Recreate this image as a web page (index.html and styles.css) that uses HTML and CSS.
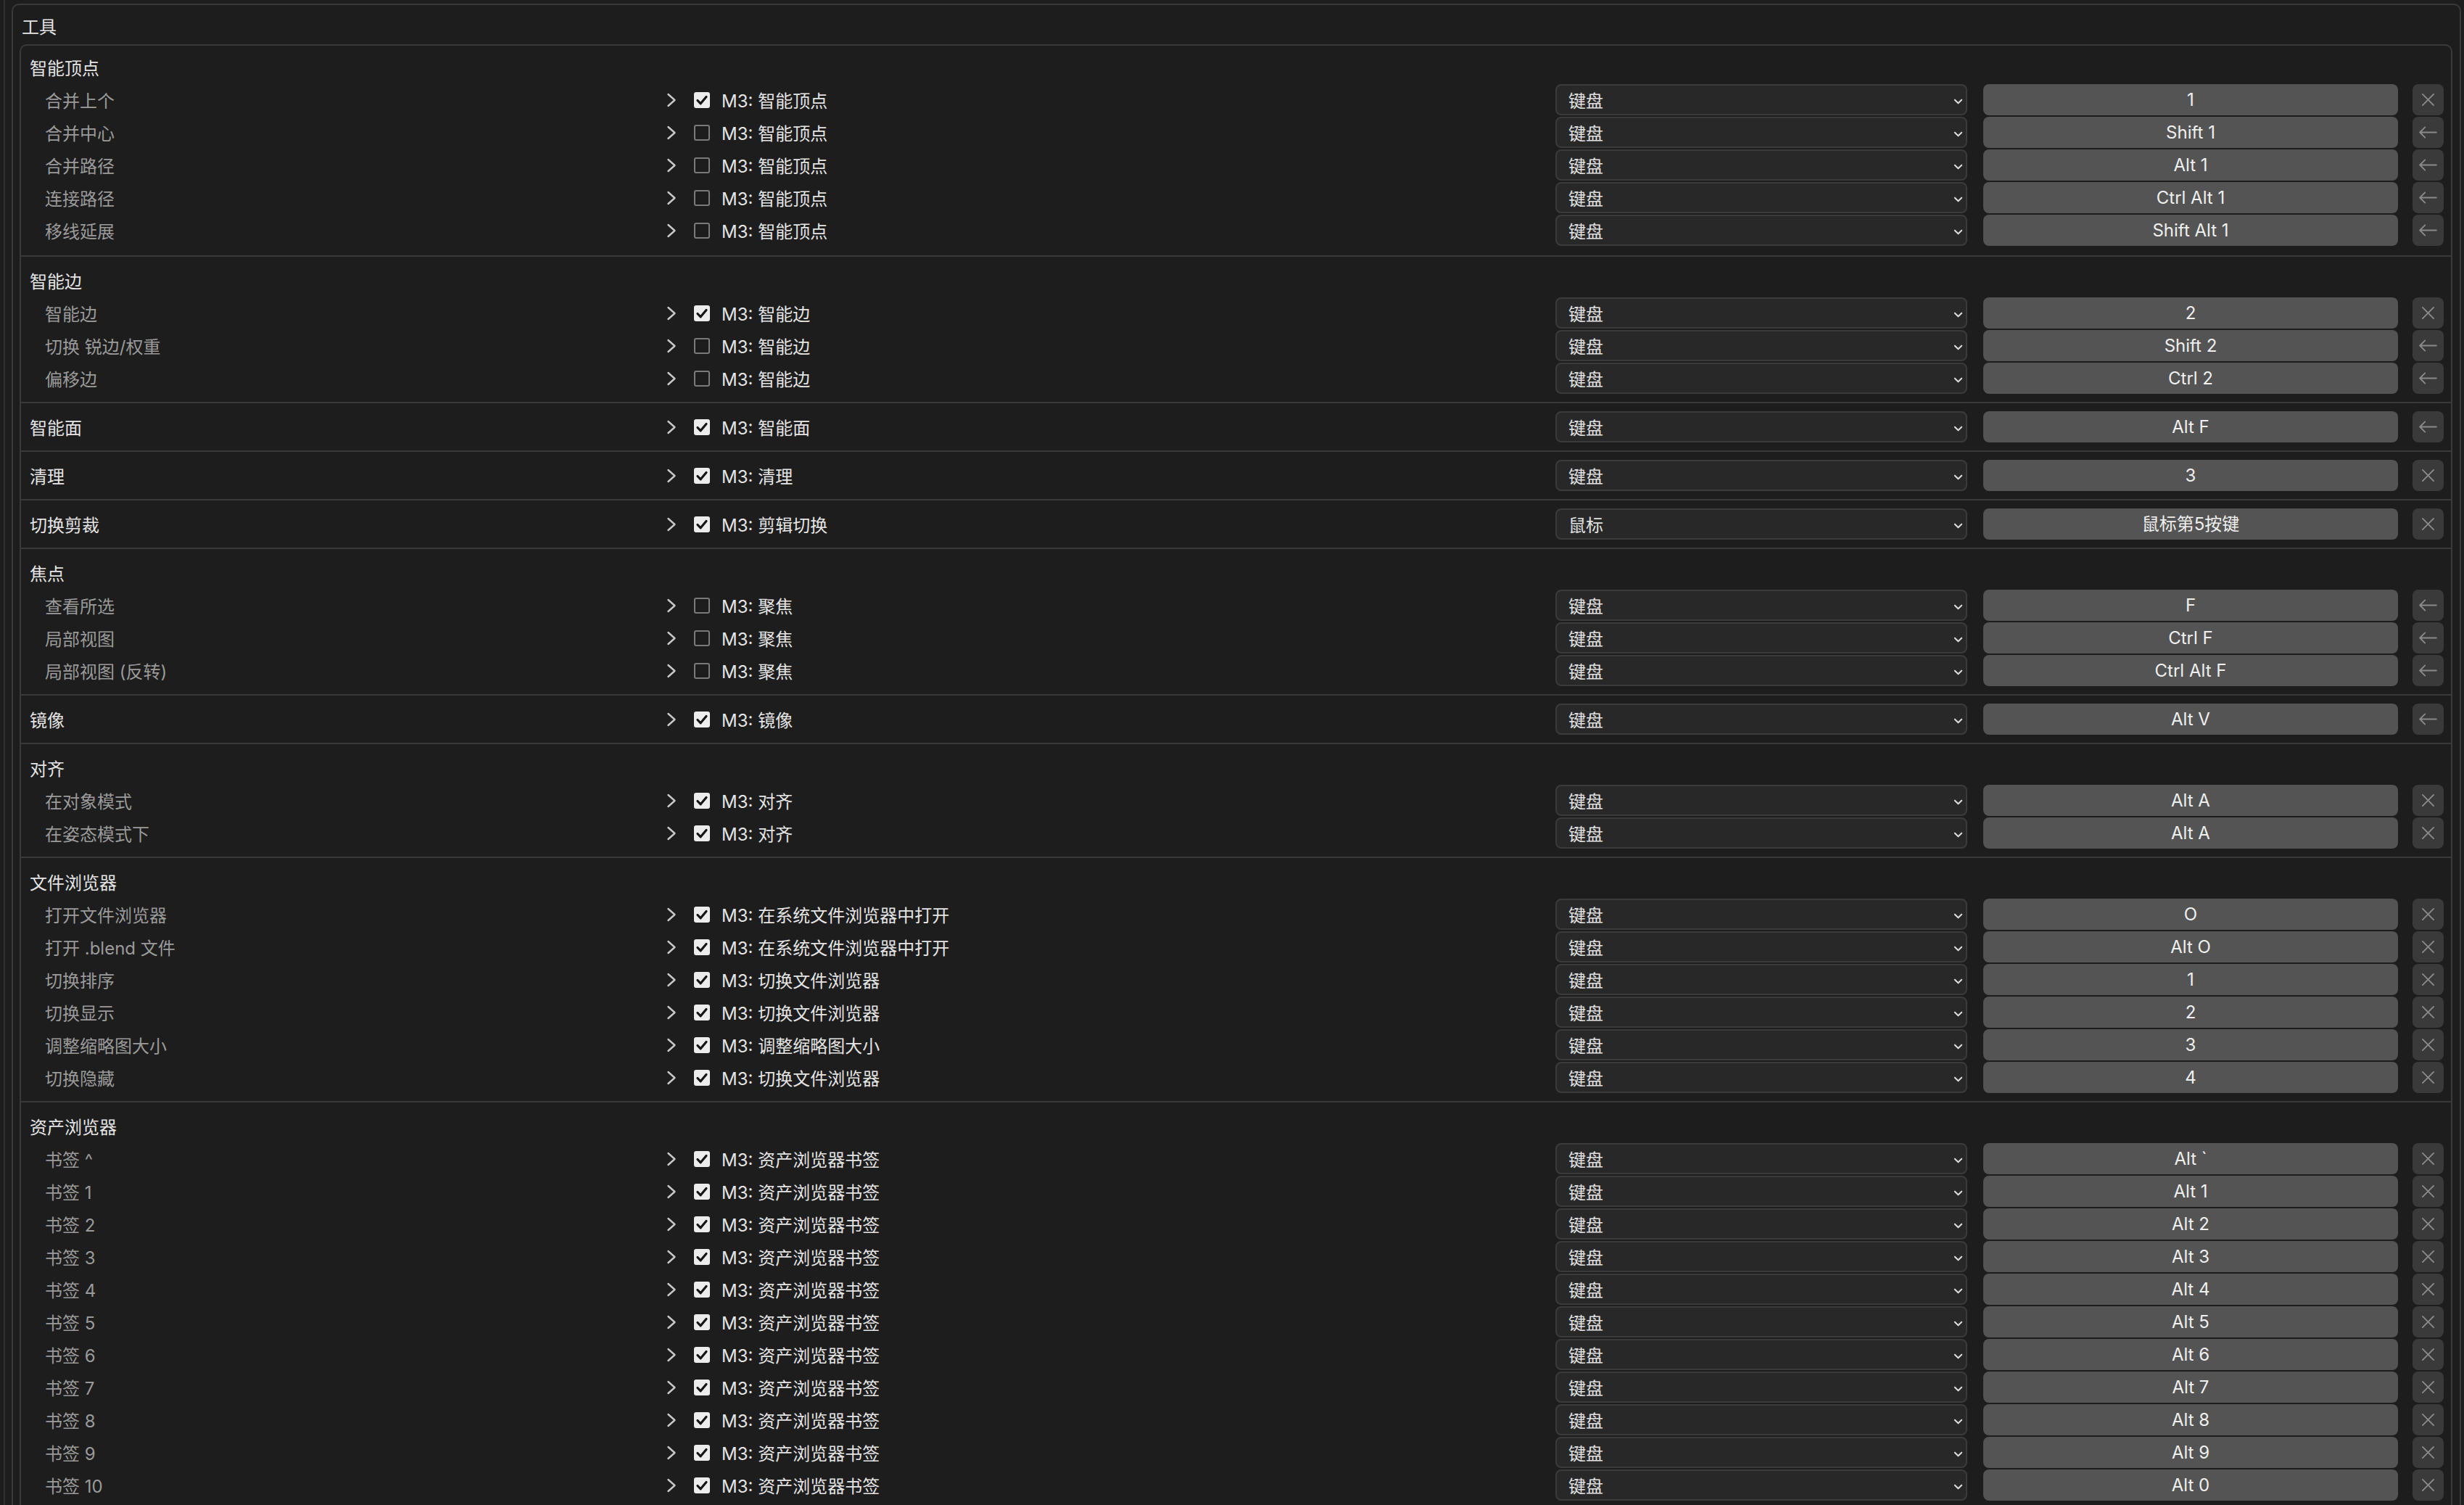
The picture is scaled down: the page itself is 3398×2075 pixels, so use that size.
FILE: index.html
```html
<!DOCTYPE html>
<html lang="zh">
	<head>
		<meta charset="UTF-8" />
		<meta name="viewport" content="width=device-width, initial-scale=1.0" />
		<title>工具 - 快捷键</title>
		<link rel="stylesheet" href="styles.css">
	</head>
	<body>
		<!-- shared icons -->
		<svg class="defs" width="0" height="0">
			<symbol id="i-chev" viewBox="0 0 14 20"><polyline points="2.5,2 11.5,10 2.5,18" fill="none" stroke="currentColor" stroke-width="2.4" stroke-linecap="round" stroke-linejoin="round"/></symbol>
			<symbol id="i-tick" viewBox="0 0 22 22"><polyline points="5,11.5 9.2,15.8 17,6.5" fill="none" stroke="currentColor" stroke-width="3.2" stroke-linecap="round" stroke-linejoin="round"/></symbol>
			<symbol id="i-down" viewBox="0 0 14 10"><polyline points="2,2.5 7,7.5 12,2.5" fill="none" stroke="currentColor" stroke-width="2.2" stroke-linecap="round" stroke-linejoin="round"/></symbol>
			<symbol id="i-x" viewBox="0 0 20 20"><path d="M2 2 L18 18 M18 2 L2 18" fill="none" stroke="currentColor" stroke-width="2" stroke-linecap="round"/></symbol>
			<symbol id="i-back" viewBox="0 0 28 18"><path d="M2 9 H26 M9.5 1.5 L2 9 L9.5 16.5" fill="none" stroke="currentColor" stroke-width="2" stroke-linecap="round" stroke-linejoin="round"/></symbol>
		</svg>

		<div class="region">
			<div class="panel">
				<div class="panel-title">工具</div>
				<div class="box">

					<div class="section">
						<div class="row"><span class="label head">智能顶点</span></div>
						<div class="row">
							<span class="label">合并上个</span>
							<span class="expand"><svg><use href="#i-chev"/></svg></span>
							<span class="check on"><svg><use href="#i-tick"/></svg></span>
							<span class="op">M3: 智能顶点</span>
							<span class="select">键盘<svg><use href="#i-down"/></svg></span>
							<span class="key">1</span>
							<span class="btn"><svg class="x"><use href="#i-x"/></svg></span>
						</div>
						<div class="row">
							<span class="label">合并中心</span>
							<span class="expand"><svg><use href="#i-chev"/></svg></span>
							<span class="check"></span>
							<span class="op">M3: 智能顶点</span>
							<span class="select">键盘<svg><use href="#i-down"/></svg></span>
							<span class="key">Shift 1</span>
							<span class="btn"><svg class="back"><use href="#i-back"/></svg></span>
						</div>
						<div class="row">
							<span class="label">合并路径</span>
							<span class="expand"><svg><use href="#i-chev"/></svg></span>
							<span class="check"></span>
							<span class="op">M3: 智能顶点</span>
							<span class="select">键盘<svg><use href="#i-down"/></svg></span>
							<span class="key">Alt 1</span>
							<span class="btn"><svg class="back"><use href="#i-back"/></svg></span>
						</div>
						<div class="row">
							<span class="label">连接路径</span>
							<span class="expand"><svg><use href="#i-chev"/></svg></span>
							<span class="check"></span>
							<span class="op">M3: 智能顶点</span>
							<span class="select">键盘<svg><use href="#i-down"/></svg></span>
							<span class="key">Ctrl Alt 1</span>
							<span class="btn"><svg class="back"><use href="#i-back"/></svg></span>
						</div>
						<div class="row">
							<span class="label">移线延展</span>
							<span class="expand"><svg><use href="#i-chev"/></svg></span>
							<span class="check"></span>
							<span class="op">M3: 智能顶点</span>
							<span class="select">键盘<svg><use href="#i-down"/></svg></span>
							<span class="key">Shift Alt 1</span>
							<span class="btn"><svg class="back"><use href="#i-back"/></svg></span>
						</div>
					</div>

					<div class="section">
						<div class="row"><span class="label head">智能边</span></div>
						<div class="row">
							<span class="label">智能边</span>
							<span class="expand"><svg><use href="#i-chev"/></svg></span>
							<span class="check on"><svg><use href="#i-tick"/></svg></span>
							<span class="op">M3: 智能边</span>
							<span class="select">键盘<svg><use href="#i-down"/></svg></span>
							<span class="key">2</span>
							<span class="btn"><svg class="x"><use href="#i-x"/></svg></span>
						</div>
						<div class="row">
							<span class="label">切换 锐边/权重</span>
							<span class="expand"><svg><use href="#i-chev"/></svg></span>
							<span class="check"></span>
							<span class="op">M3: 智能边</span>
							<span class="select">键盘<svg><use href="#i-down"/></svg></span>
							<span class="key">Shift 2</span>
							<span class="btn"><svg class="back"><use href="#i-back"/></svg></span>
						</div>
						<div class="row">
							<span class="label">偏移边</span>
							<span class="expand"><svg><use href="#i-chev"/></svg></span>
							<span class="check"></span>
							<span class="op">M3: 智能边</span>
							<span class="select">键盘<svg><use href="#i-down"/></svg></span>
							<span class="key">Ctrl 2</span>
							<span class="btn"><svg class="back"><use href="#i-back"/></svg></span>
						</div>
					</div>

					<div class="section">
						<div class="row">
							<span class="label head">智能面</span>
							<span class="expand"><svg><use href="#i-chev"/></svg></span>
							<span class="check on"><svg><use href="#i-tick"/></svg></span>
							<span class="op">M3: 智能面</span>
							<span class="select">键盘<svg><use href="#i-down"/></svg></span>
							<span class="key">Alt F</span>
							<span class="btn"><svg class="back"><use href="#i-back"/></svg></span>
						</div>
					</div>

					<div class="section">
						<div class="row">
							<span class="label head">清理</span>
							<span class="expand"><svg><use href="#i-chev"/></svg></span>
							<span class="check on"><svg><use href="#i-tick"/></svg></span>
							<span class="op">M3: 清理</span>
							<span class="select">键盘<svg><use href="#i-down"/></svg></span>
							<span class="key">3</span>
							<span class="btn"><svg class="x"><use href="#i-x"/></svg></span>
						</div>
					</div>

					<div class="section">
						<div class="row">
							<span class="label head">切换剪裁</span>
							<span class="expand"><svg><use href="#i-chev"/></svg></span>
							<span class="check on"><svg><use href="#i-tick"/></svg></span>
							<span class="op">M3: 剪辑切换</span>
							<span class="select">鼠标<svg><use href="#i-down"/></svg></span>
							<span class="key">鼠标第5按键</span>
							<span class="btn"><svg class="x"><use href="#i-x"/></svg></span>
						</div>
					</div>

					<div class="section">
						<div class="row"><span class="label head">焦点</span></div>
						<div class="row">
							<span class="label">查看所选</span>
							<span class="expand"><svg><use href="#i-chev"/></svg></span>
							<span class="check"></span>
							<span class="op">M3: 聚焦</span>
							<span class="select">键盘<svg><use href="#i-down"/></svg></span>
							<span class="key">F</span>
							<span class="btn"><svg class="back"><use href="#i-back"/></svg></span>
						</div>
						<div class="row">
							<span class="label">局部视图</span>
							<span class="expand"><svg><use href="#i-chev"/></svg></span>
							<span class="check"></span>
							<span class="op">M3: 聚焦</span>
							<span class="select">键盘<svg><use href="#i-down"/></svg></span>
							<span class="key">Ctrl F</span>
							<span class="btn"><svg class="back"><use href="#i-back"/></svg></span>
						</div>
						<div class="row">
							<span class="label">局部视图 (反转)</span>
							<span class="expand"><svg><use href="#i-chev"/></svg></span>
							<span class="check"></span>
							<span class="op">M3: 聚焦</span>
							<span class="select">键盘<svg><use href="#i-down"/></svg></span>
							<span class="key">Ctrl Alt F</span>
							<span class="btn"><svg class="back"><use href="#i-back"/></svg></span>
						</div>
					</div>

					<div class="section">
						<div class="row">
							<span class="label head">镜像</span>
							<span class="expand"><svg><use href="#i-chev"/></svg></span>
							<span class="check on"><svg><use href="#i-tick"/></svg></span>
							<span class="op">M3: 镜像</span>
							<span class="select">键盘<svg><use href="#i-down"/></svg></span>
							<span class="key">Alt V</span>
							<span class="btn"><svg class="back"><use href="#i-back"/></svg></span>
						</div>
					</div>

					<div class="section">
						<div class="row"><span class="label head">对齐</span></div>
						<div class="row">
							<span class="label">在对象模式</span>
							<span class="expand"><svg><use href="#i-chev"/></svg></span>
							<span class="check on"><svg><use href="#i-tick"/></svg></span>
							<span class="op">M3: 对齐</span>
							<span class="select">键盘<svg><use href="#i-down"/></svg></span>
							<span class="key">Alt A</span>
							<span class="btn"><svg class="x"><use href="#i-x"/></svg></span>
						</div>
						<div class="row">
							<span class="label">在姿态模式下</span>
							<span class="expand"><svg><use href="#i-chev"/></svg></span>
							<span class="check on"><svg><use href="#i-tick"/></svg></span>
							<span class="op">M3: 对齐</span>
							<span class="select">键盘<svg><use href="#i-down"/></svg></span>
							<span class="key">Alt A</span>
							<span class="btn"><svg class="x"><use href="#i-x"/></svg></span>
						</div>
					</div>

					<div class="section">
						<div class="row"><span class="label head">文件浏览器</span></div>
						<div class="row">
							<span class="label">打开文件浏览器</span>
							<span class="expand"><svg><use href="#i-chev"/></svg></span>
							<span class="check on"><svg><use href="#i-tick"/></svg></span>
							<span class="op">M3: 在系统文件浏览器中打开</span>
							<span class="select">键盘<svg><use href="#i-down"/></svg></span>
							<span class="key">O</span>
							<span class="btn"><svg class="x"><use href="#i-x"/></svg></span>
						</div>
						<div class="row">
							<span class="label">打开 .blend 文件</span>
							<span class="expand"><svg><use href="#i-chev"/></svg></span>
							<span class="check on"><svg><use href="#i-tick"/></svg></span>
							<span class="op">M3: 在系统文件浏览器中打开</span>
							<span class="select">键盘<svg><use href="#i-down"/></svg></span>
							<span class="key">Alt O</span>
							<span class="btn"><svg class="x"><use href="#i-x"/></svg></span>
						</div>
						<div class="row">
							<span class="label">切换排序</span>
							<span class="expand"><svg><use href="#i-chev"/></svg></span>
							<span class="check on"><svg><use href="#i-tick"/></svg></span>
							<span class="op">M3: 切换文件浏览器</span>
							<span class="select">键盘<svg><use href="#i-down"/></svg></span>
							<span class="key">1</span>
							<span class="btn"><svg class="x"><use href="#i-x"/></svg></span>
						</div>
						<div class="row">
							<span class="label">切换显示</span>
							<span class="expand"><svg><use href="#i-chev"/></svg></span>
							<span class="check on"><svg><use href="#i-tick"/></svg></span>
							<span class="op">M3: 切换文件浏览器</span>
							<span class="select">键盘<svg><use href="#i-down"/></svg></span>
							<span class="key">2</span>
							<span class="btn"><svg class="x"><use href="#i-x"/></svg></span>
						</div>
						<div class="row">
							<span class="label">调整缩略图大小</span>
							<span class="expand"><svg><use href="#i-chev"/></svg></span>
							<span class="check on"><svg><use href="#i-tick"/></svg></span>
							<span class="op">M3: 调整缩略图大小</span>
							<span class="select">键盘<svg><use href="#i-down"/></svg></span>
							<span class="key">3</span>
							<span class="btn"><svg class="x"><use href="#i-x"/></svg></span>
						</div>
						<div class="row">
							<span class="label">切换隐藏</span>
							<span class="expand"><svg><use href="#i-chev"/></svg></span>
							<span class="check on"><svg><use href="#i-tick"/></svg></span>
							<span class="op">M3: 切换文件浏览器</span>
							<span class="select">键盘<svg><use href="#i-down"/></svg></span>
							<span class="key">4</span>
							<span class="btn"><svg class="x"><use href="#i-x"/></svg></span>
						</div>
					</div>

					<div class="section">
						<div class="row"><span class="label head">资产浏览器</span></div>
						<div class="row">
							<span class="label">书签 ^</span>
							<span class="expand"><svg><use href="#i-chev"/></svg></span>
							<span class="check on"><svg><use href="#i-tick"/></svg></span>
							<span class="op">M3: 资产浏览器书签</span>
							<span class="select">键盘<svg><use href="#i-down"/></svg></span>
							<span class="key">Alt `</span>
							<span class="btn"><svg class="x"><use href="#i-x"/></svg></span>
						</div>
						<div class="row">
							<span class="label">书签 1</span>
							<span class="expand"><svg><use href="#i-chev"/></svg></span>
							<span class="check on"><svg><use href="#i-tick"/></svg></span>
							<span class="op">M3: 资产浏览器书签</span>
							<span class="select">键盘<svg><use href="#i-down"/></svg></span>
							<span class="key">Alt 1</span>
							<span class="btn"><svg class="x"><use href="#i-x"/></svg></span>
						</div>
						<div class="row">
							<span class="label">书签 2</span>
							<span class="expand"><svg><use href="#i-chev"/></svg></span>
							<span class="check on"><svg><use href="#i-tick"/></svg></span>
							<span class="op">M3: 资产浏览器书签</span>
							<span class="select">键盘<svg><use href="#i-down"/></svg></span>
							<span class="key">Alt 2</span>
							<span class="btn"><svg class="x"><use href="#i-x"/></svg></span>
						</div>
						<div class="row">
							<span class="label">书签 3</span>
							<span class="expand"><svg><use href="#i-chev"/></svg></span>
							<span class="check on"><svg><use href="#i-tick"/></svg></span>
							<span class="op">M3: 资产浏览器书签</span>
							<span class="select">键盘<svg><use href="#i-down"/></svg></span>
							<span class="key">Alt 3</span>
							<span class="btn"><svg class="x"><use href="#i-x"/></svg></span>
						</div>
						<div class="row">
							<span class="label">书签 4</span>
							<span class="expand"><svg><use href="#i-chev"/></svg></span>
							<span class="check on"><svg><use href="#i-tick"/></svg></span>
							<span class="op">M3: 资产浏览器书签</span>
							<span class="select">键盘<svg><use href="#i-down"/></svg></span>
							<span class="key">Alt 4</span>
							<span class="btn"><svg class="x"><use href="#i-x"/></svg></span>
						</div>
						<div class="row">
							<span class="label">书签 5</span>
							<span class="expand"><svg><use href="#i-chev"/></svg></span>
							<span class="check on"><svg><use href="#i-tick"/></svg></span>
							<span class="op">M3: 资产浏览器书签</span>
							<span class="select">键盘<svg><use href="#i-down"/></svg></span>
							<span class="key">Alt 5</span>
							<span class="btn"><svg class="x"><use href="#i-x"/></svg></span>
						</div>
						<div class="row">
							<span class="label">书签 6</span>
							<span class="expand"><svg><use href="#i-chev"/></svg></span>
							<span class="check on"><svg><use href="#i-tick"/></svg></span>
							<span class="op">M3: 资产浏览器书签</span>
							<span class="select">键盘<svg><use href="#i-down"/></svg></span>
							<span class="key">Alt 6</span>
							<span class="btn"><svg class="x"><use href="#i-x"/></svg></span>
						</div>
						<div class="row">
							<span class="label">书签 7</span>
							<span class="expand"><svg><use href="#i-chev"/></svg></span>
							<span class="check on"><svg><use href="#i-tick"/></svg></span>
							<span class="op">M3: 资产浏览器书签</span>
							<span class="select">键盘<svg><use href="#i-down"/></svg></span>
							<span class="key">Alt 7</span>
							<span class="btn"><svg class="x"><use href="#i-x"/></svg></span>
						</div>
						<div class="row">
							<span class="label">书签 8</span>
							<span class="expand"><svg><use href="#i-chev"/></svg></span>
							<span class="check on"><svg><use href="#i-tick"/></svg></span>
							<span class="op">M3: 资产浏览器书签</span>
							<span class="select">键盘<svg><use href="#i-down"/></svg></span>
							<span class="key">Alt 8</span>
							<span class="btn"><svg class="x"><use href="#i-x"/></svg></span>
						</div>
						<div class="row">
							<span class="label">书签 9</span>
							<span class="expand"><svg><use href="#i-chev"/></svg></span>
							<span class="check on"><svg><use href="#i-tick"/></svg></span>
							<span class="op">M3: 资产浏览器书签</span>
							<span class="select">键盘<svg><use href="#i-down"/></svg></span>
							<span class="key">Alt 9</span>
							<span class="btn"><svg class="x"><use href="#i-x"/></svg></span>
						</div>
						<div class="row">
							<span class="label">书签 10</span>
							<span class="expand"><svg><use href="#i-chev"/></svg></span>
							<span class="check on"><svg><use href="#i-tick"/></svg></span>
							<span class="op">M3: 资产浏览器书签</span>
							<span class="select">键盘<svg><use href="#i-down"/></svg></span>
							<span class="key">Alt 0</span>
							<span class="btn"><svg class="x"><use href="#i-x"/></svg></span>
						</div>
					</div>

				</div>
			</div>
		</div>
	</body>
</html>
```

FILE: styles.css
```css
body {
	margin: 0;
	height: 2075px;
	overflow: hidden;
	background-color: #1d1d1d;
	color: #e4e4e4;
	font-family: Inter, "Noto Sans CJK SC", sans-serif;
	font-size: 24px;
}
.defs {
	position: absolute;
}
.region {
	margin-left: 5px;
	height: 2075px;
	padding: 5px 4px 0 9px;
	border-left: 2px solid #303030;
	box-sizing: border-box;
}
.panel {
	height: 100%;
	border: 2px solid #3a3a3a;
	border-bottom: none;
	border-radius: 10px 10px 0 0;
}
.panel-title {
	padding: 14px 0 6px 12px;
	line-height: 34px;
}
.box {
	margin: 0 10px 0 9px;
	border: 2px solid #3a3a3a;
	border-bottom: none;
	border-radius: 10px 10px 0 0;
}
.section {
	padding: 10px 0;
	border-top: 2px solid #3a3a3a;
}
.section:first-child {
	padding: 7px 0 12px;
	border-top: none;
}
.row {
	display: flex;
	align-items: center;
	height: 45px;
	padding-right: 10px;
}
.label {
	flex: none;
	width: 890px;
	padding-left: 33px;
	box-sizing: border-box;
	color: #9a9a9a;
	white-space: nowrap;
}
.label.head {
	padding-left: 12px;
	color: #e4e4e4;
}
.expand {
	flex: none;
	width: 38px;
	height: 20px;
	color: #c8c8c8;
}
.expand svg {
	display: block;
	width: 14px;
	height: 20px;
}
.check {
	flex: none;
	width: 22px;
	height: 22px;
	margin-right: 16px;
	border: 2px solid #7a7a7a;
	border-radius: 3px;
	box-sizing: border-box;
}
.check.on {
	background-color: #ececec;
	border-color: #ececec;
	color: #151515;
}
.check svg {
	display: block;
	width: 22px;
	height: 22px;
	margin: -2px;
}
.op {
	flex: 1;
	white-space: nowrap;
}
.select {
	flex: none;
	display: flex;
	align-items: center;
	justify-content: space-between;
	width: 568px;
	height: 43px;
	padding: 0 4px 0 16px;
	box-sizing: border-box;
	background-color: #282828;
	border: 2px solid #3b3b3b;
	border-radius: 8px;
	color: #e0e0e0;
}
.select svg {
	width: 13px;
	height: 10px;
	margin-top: 5px;
	color: #dcdcdc;
}
.key {
	flex: none;
	width: 572px;
	height: 43px;
	margin-left: 22px;
	line-height: 43px;
	text-align: center;
	background-color: #545454;
	border-radius: 8px;
	color: #efefef;
	white-space: nowrap;
}
.btn {
	flex: none;
	display: flex;
	align-items: center;
	justify-content: center;
	width: 43px;
	height: 43px;
	margin-left: 20px;
	background-color: #3a3a3a;
	border-radius: 8px;
	color: #8a8a8a;
}
.btn .x {
	width: 19px;
	height: 19px;
}
.btn .back {
	width: 27px;
	height: 17px;
}
```
